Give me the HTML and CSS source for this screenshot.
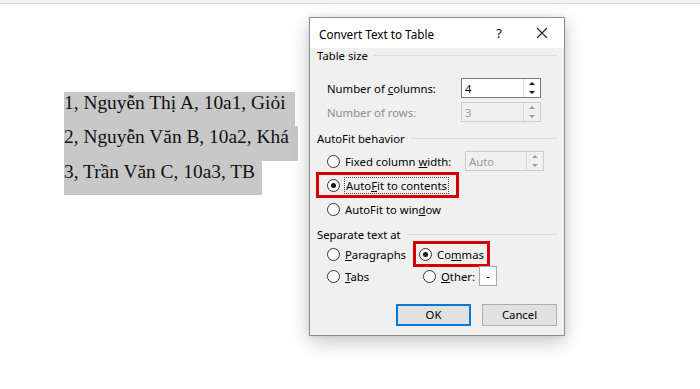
FILE: index.html
```html
<!doctype html>
<html lang="vi">
<head>
	<meta charset="utf-8">
	<title>Convert Text to Table</title>
	<link rel="stylesheet" href="styles.css">
</head>
<body>
<div class="topbar"></div>

<div class="doc">
	<p class="line l1">1, Nguyễn Thị A, 10a1, Giỏi</p>
	<p class="line l2">2, Nguyễn Văn B, 10a2, Khá</p>
	<p class="line l3">3, Trần Văn C, 10a3, TB</p>
</div>

<div class="dialog">
	<div class="titlebar">
		<span class="title">Convert Text to Table</span>
		<span class="help">?</span>
		<svg class="close" width="12" height="12" viewBox="0 0 12 12"><path d="M1 1L11 11M11 1L1 11" stroke="#222" stroke-width="1.1" fill="none"/></svg>
	</div>
	<div class="body">
		<div class="group g1"><span>Table size</span></div>
		<div class="row r-cols">
			<span class="lbl">Number of <u>c</u>olumns:</span>
			<div class="spin">
				<span class="val">4</span>
				<div class="arrows">
					<svg width="16" height="9" viewBox="0 0 16 9"><path d="M5 6L8 3L11 6Z" fill="#111"/></svg>
					<svg width="16" height="9" viewBox="0 0 16 9"><path d="M5 3L8 6L11 3Z" fill="#111"/></svg>
				</div>
			</div>
		</div>
		<div class="row r-rows off">
			<span class="lbl">Number of rows:</span>
			<div class="spin dis">
				<span class="val">3</span>
				<div class="arrows">
					<svg width="16" height="9" viewBox="0 0 16 9"><path d="M5 6L8 3L11 6Z" fill="#a0a0a0"/></svg>
					<svg width="16" height="9" viewBox="0 0 16 9"><path d="M5 3L8 6L11 3Z" fill="#a0a0a0"/></svg>
				</div>
			</div>
		</div>

		<div class="group g2"><span>AutoFit behavior</span></div>
		<div class="row r-fixed">
			<span class="radio"></span>
			<span class="opt wide">Fixed column <u>w</u>idth:</span>
			<div class="spin dis auto">
				<span class="val">Auto</span>
				<div class="arrows">
					<svg width="16" height="9" viewBox="0 0 16 9"><path d="M5 6L8 3L11 6Z" fill="#a0a0a0"/></svg>
					<svg width="16" height="9" viewBox="0 0 16 9"><path d="M5 3L8 6L11 3Z" fill="#a0a0a0"/></svg>
				</div>
			</div>
		</div>
		<div class="row r-contents">
			<div class="mark m1">
				<span class="radio on"></span>
				<span class="opt focus">Auto<u>F</u>it to contents</span>
			</div>
		</div>
		<div class="row r-window">
			<span class="radio"></span>
			<span class="opt">AutoFit to win<u>d</u>ow</span>
		</div>

		<div class="group g3"><span>Separate text at</span></div>
		<div class="sep">
			<div class="row">
				<span class="radio"></span>
				<span class="opt"><u>P</u>aragraphs</span>
			</div>
			<div class="row">
				<div class="mark m2">
					<span class="radio on"></span>
					<span class="opt">Co<u>m</u>mas</span>
				</div>
			</div>
			<div class="row">
				<span class="radio"></span>
				<span class="opt"><u>T</u>abs</span>
			</div>
			<div class="row">
				<span class="radio"></span>
				<span class="opt"><u>O</u>ther:</span>
				<span class="other">-</span>
			</div>
		</div>

		<div class="buttons">
			<span class="btn ok">OK</span>
			<span class="btn">Cancel</span>
		</div>
	</div>
</div>
</body>
</html>
```
FILE: styles.css
```css
html, body {
	margin: 0;
	background: #fff;
}
body {
	width: 700px;
	height: 389px;
	overflow: hidden;
	position: relative;
}
.topbar {
	height: 3px;
	background: #f3f3f3;
	border-bottom: 1px solid #d9d9d9;
}

/* document text */
.doc {
	padding: 88px 0 0 64px;
	font-family: "Liberation Serif", "Times New Roman", serif;
	font-size: 19.4px;
	color: #111;
}
.line {
	margin: 0;
	width: fit-content;
	height: 34px;
	line-height: 22px;
	background: #c8c8c8;
}
.l1 { padding-right: 9px; }
.l2 { padding-right: 9px; height: 35px; }
.l3 { padding-right: 7px; }

/* dialog window */
.dialog {
	position: absolute;
	left: 309px;
	top: 17px;
	width: 254px;
	height: 317px;
	border: 1px solid #8c8c8c;
	background: #f0f0f0;
	box-shadow: 0 6px 18px rgba(0, 0, 0, 0.22), 0 0 6px rgba(0, 0, 0, 0.08);
	font-family: "Noto Sans", sans-serif;
	font-size: 11.3px;
	color: #000;
}
.titlebar {
	height: 30px;
	background: #fff;
	display: flex;
	align-items: center;
	padding-left: 9px;
}
.title {
	font-size: 11.7px;
	flex: 1;
	padding-top: 1px;
}
.help {
	font-size: 13px;
	margin-right: 34px;
}
.close {
	margin-right: 16px;
}
.body {
	padding: 0 7px 0 7px;
}
.group {
	height: 14px;
	display: flex;
	align-items: center;
}
.group::after {
	content: "";
	flex: 1;
	height: 1px;
	background: #dcdcdc;
	margin-left: 6px;
}
.g1 { margin-top: 0; }
.g2 { margin-top: 9px; }
.g3 { margin-top: 8px; }

.row {
	height: 20px;
	display: flex;
	align-items: center;
	padding-left: 10px;
}
.r-cols { margin-top: 16px; }
.r-rows { margin-top: 4px; }
.r-fixed { margin-top: 6px; }
.r-contents { margin-top: 4px; padding-left: 0; }
.r-window { margin-top: 4px; }
.off { color: #8d8d8d; }
.lbl {
	width: 134px;
}

.spin {
	width: 78px;
	height: 18px;
	border: 1px solid #7a7a7a;
	background: #fff;
	display: flex;
	align-items: center;
}
.spin .val {
	flex: 1;
	padding-left: 3px;
}
.arrows {
	width: 16px;
	height: 18px;
	display: flex;
	flex-direction: column;
	border-left: 1px solid #dcdcdc;
}
.arrows svg {
	display: block;
}
.spin.dis {
	border-color: #cccccc;
	background: #f0f0f0;
	color: #9a9a9a;
}
.spin.auto {
	margin-left: 8px;
	width: 77px;
}

.radio {
	width: 11px;
	height: 11px;
	border: 1px solid #333;
	border-radius: 50%;
	background: #fff;
	margin-right: 5px;
	flex: none;
	position: relative;
}
.radio.on::after {
	content: "";
	position: absolute;
	left: 3px;
	top: 3px;
	width: 5px;
	height: 5px;
	border-radius: 50%;
	background: #111;
}
.opt.wide {
	width: 112px;
}
.focus {
	outline: 1px dotted #444;
	outline-offset: 0;
	padding: 0 1px;
}

/* red annotation boxes */
.mark {
	display: flex;
	align-items: center;
	border: 3px solid #d40000;
}
.m1 {
	width: 129px;
	height: 20px;
	padding-left: 8px;
	margin-left: -1px;
}
.m2 {
	width: 68px;
	height: 20px;
	padding-left: 3px;
	margin-left: -10px;
}

.sep {
	display: grid;
	grid-template-columns: 96px 1fr;
	grid-auto-rows: 22px;
	margin-top: 2px;
}
.sep .row {
	height: 22px;
}
.other {
	width: 16px;
	height: 18px;
	border: 1px solid #a8a8a8;
	background: #fff;
	margin-left: 4px;
	text-align: center;
	line-height: 17px;
}

.buttons {
	display: flex;
	justify-content: flex-end;
	gap: 11px;
	margin-top: 17px;
}
.btn {
	width: 73px;
	height: 20px;
	border: 1px solid #adadad;
	background: #e1e1e1;
	text-align: center;
	line-height: 20px;
}
.btn.ok {
	border: 2px solid #0078d7;
	width: 71px;
	height: 18px;
	line-height: 18px;
}
```
